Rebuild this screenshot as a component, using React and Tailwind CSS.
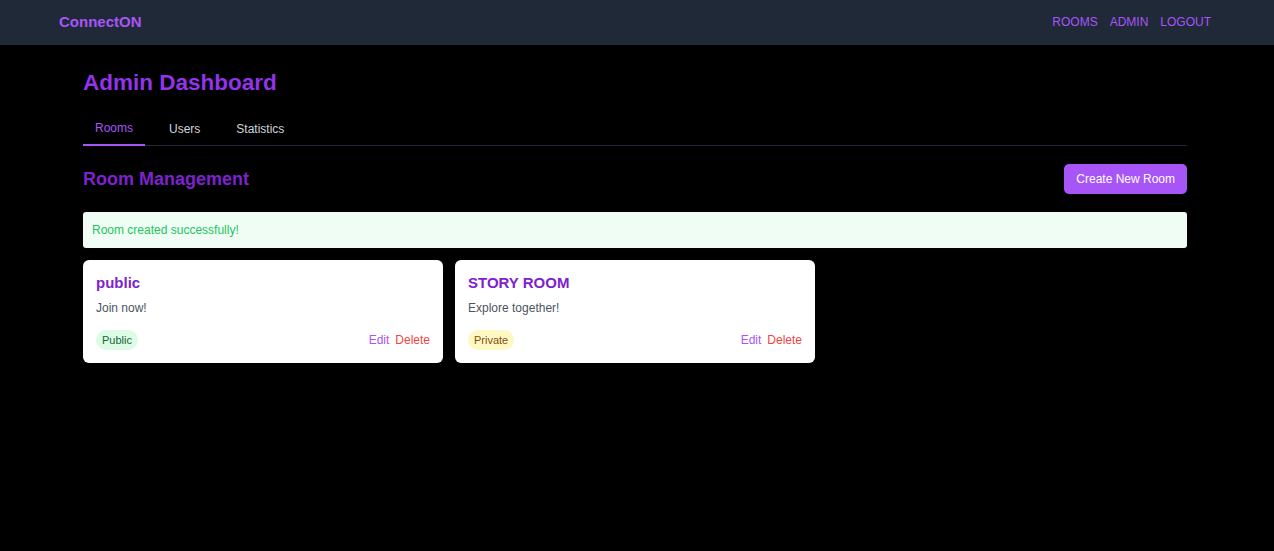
import React from 'react';

const rooms = [
  { id: 1, name: 'public', description: 'Join now!', isPrivate: false },
  { id: 2, name: 'STORY ROOM', description: 'Explore together!', isPrivate: true },
];

const tabs = ['Rooms', 'Users', 'Statistics'];

const App = () => {
  return (
    <div className="min-h-[551px] bg-black" style={{ fontFamily: '"Liberation Sans", Arial, sans-serif' }}>
      {/* Navbar */}
      <nav className="bg-[#1f2937] h-[45px]">
        <div className="mx-[59px] mr-[63px] h-full flex items-center justify-between">
          <span className="text-[15px] font-bold text-[#a855f7]">ConnectON</span>
          <div className="flex items-center gap-[12px] text-[12px] text-[#a855f7] pb-[2px]">
            <a>ROOMS</a>
            <a>ADMIN</a>
            <a>LOGOUT</a>
          </div>
        </div>
      </nav>

      <main className="mx-[83px] mr-[87px] pt-[24px]">
        <h1 className="text-[22.5px] font-bold text-[#9333ea] leading-[28px]">Admin Dashboard</h1>

        {/* Tabs */}
        <div className="mt-[22px] flex gap-[12px] border-b border-[#1f2937]">
          {tabs.map((tab, i) => (
            <button
              key={tab}
              className={
                i === 0
                  ? 'px-[12px] pb-[7px] text-[12px] text-[#a855f7] border-b-2 border-[#a855f7] -mb-px'
                  : 'px-[12px] pb-[7px] text-[12px] text-[#d1d5db]'
              }
            >
              {tab}
            </button>
          ))}
        </div>

        {/* Room management header */}
        <div className="mt-[18px] flex items-center justify-between">
          <h2 className="text-[18px] font-bold text-[#7e22ce]">Room Management</h2>
          <button className="bg-[#a855f7] text-white text-[12px] rounded-[5px] h-[30px] px-[12px]">
            Create New Room
          </button>
        </div>

        {/* Success alert */}
        <div className="mt-[18px] h-[36px] flex items-center px-[9px] bg-[#f0fdf4] rounded-[3px] text-[12px] text-[#22c55e]">
          Room created successfully!
        </div>

        {/* Room cards */}
        <div className="mt-[12px] grid grid-cols-3 gap-[12px]">
          {rooms.map(room => (
            <div key={room.id} className="bg-white rounded-[6px] p-[13px] h-[103px] flex flex-col">
              <h3 className="text-[15px] font-bold text-[#7e22ce] leading-[20px]">{room.name}</h3>
              <p className="mt-[6px] text-[12px] text-[#4b5563]">{room.description}</p>
              <div className="mt-auto flex items-center justify-between">
                <span
                  className={
                    room.isPrivate
                      ? 'px-[6px] h-[20px] flex items-center rounded-full text-[11px] bg-[#fef9c3] text-[#854d0e]'
                      : 'px-[6px] h-[20px] flex items-center rounded-full text-[11px] bg-[#dcfce7] text-[#166534]'
                  }
                >
                  {room.isPrivate ? 'Private' : 'Public'}
                </span>
                <div className="flex items-center gap-[6px] text-[12px]">
                  <button className="text-[#a855f7]">Edit</button>
                  <button className="text-[#ef4444]">Delete</button>
                </div>
              </div>
            </div>
          ))}
        </div>
      </main>
    </div>
  );
};

export default App;
